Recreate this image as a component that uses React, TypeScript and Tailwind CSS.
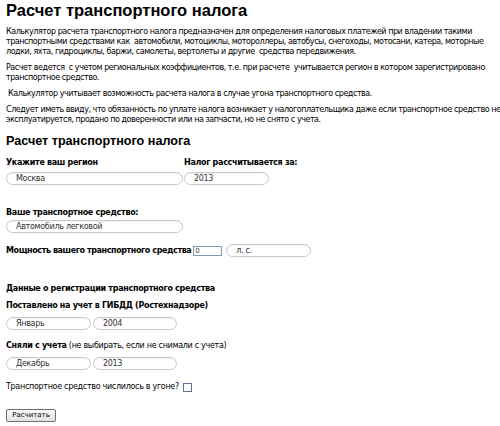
import React, { useState } from "react";

// Rounded text field, like the old form skin
const Field: React.FC<{ value: string; width: string }> = ({ value, width }) => (
  <div
    className={`${width} h-[13px] rounded-full border border-[#c9c9c9] bg-white pl-[9px] flex items-center text-[8px] text-[#333] shadow-[inset_0_1px_1px_rgba(0,0,0,0.06)]`}
  >
    {value}
  </div>
);

const App: React.FC = () => {
  const [stolen, setStolen] = useState(false);

  return (
    <div className="w-[500px] h-[426px] bg-white px-[6px] text-black font-['DejaVu_Sans',sans-serif] text-[8px] tracking-[-0.3px] overflow-hidden">
      <h1 className="font-['Liberation_Sans',sans-serif] font-bold text-[16.5px] leading-[20px] tracking-normal">
        Расчет транспортного налога
      </h1>

      <div className="mt-[7px] leading-[10px] whitespace-pre tracking-[-0.45px]">
        <p>
          Калькулятор расчета транспортного налога предназначен для определения налоговых платежей при владении такими
          <br />
          транспортными средствами как  автомобили, мотоциклы, мотороллеры, автобусы, снегоходы, мотосани, катера, моторные
          <br />
          лодки, яхта, гидроциклы, баржи, самолеты, вертолеты и другие  средства передвижения.
        </p>
        <p className="mt-[6px]">
          Расчет ведется  с учетом региональных коэффициентов, т.е. при расчете  учитывается регион в котором зарегистрировано
          <br />
          транспортное средство.
        </p>
        <p className="mt-[6px]">
          {" "}Калькулятор учитывает возможность расчета налога в случае угона транспортного средства.
        </p>
        <p className="mt-[6px]">
          Следует иметь ввиду, что обязанность по уплате налога возникает у налогоплательщика даже если транспортное средство не
          <br />
          эксплуатируется, продано по доверенности или на запчасти, но не снято с учета.
        </p>
      </div>

      <h2 className="mt-[8px] font-['Liberation_Sans',sans-serif] font-bold text-[12.6px] leading-[16px] tracking-normal">
        Расчет транспортного налога
      </h2>

      {/* region + year */}
      <div className="mt-[9px] flex">
        <div className="w-[178px]">
          <div className="font-bold leading-[10px]">Укажите ваш регион</div>
          <div className="mt-[4px]">
            <Field value="Москва" width="w-[177px]" />
          </div>
        </div>
        <div>
          <div className="font-bold leading-[10px]">Налог рассчитывается за:</div>
          <div className="mt-[4px]">
            <Field value="2013" width="w-[85px]" />
          </div>
        </div>
      </div>

      <div className="mt-[23px] font-bold leading-[10px]">Ваше транспортное средство:</div>
      <div className="mt-[2px]">
        <Field value="Автомобиль легковой" width="w-[177px]" />
      </div>

      <div className="mt-[11px] flex items-center h-[13px]">
        <span className="font-bold leading-[10px] tracking-[-0.4px]">Мощность вашего транспортного средства</span>
        <div className="ml-[2px] w-[29px] h-[10px] border border-[#7f9db9] bg-white text-[7px] leading-[8px] pl-[1px] text-[#444]">
          0
        </div>
        <div className="ml-[4px]">
          <Field value="л. с." width="w-[85px]" />
        </div>
      </div>

      <div className="mt-[27px] font-bold leading-[10px]">Данные о регистрации транспортного средства</div>
      <div className="mt-[7px] font-bold leading-[10px]">Поставлено на учет в ГИБДД (Ростехнадзоре)</div>
      <div className="mt-[6px] flex gap-[2px]">
        <Field value="Январь" width="w-[85px]" />
        <Field value="2004" width="w-[84px]" />
      </div>

      <div className="mt-[11px] leading-[10px]">
        <span className="font-bold">Сняли с учета</span> (не выбирать, если не снимали с учета)
      </div>
      <div className="mt-[6px] flex gap-[2px]">
        <Field value="Декабрь" width="w-[85px]" />
        <Field value="2013" width="w-[84px]" />
      </div>

      <div className="mt-[12px] flex items-center leading-[10px]">
        <span>Транспортное средство числилось в угоне?</span>
        <button
          type="button"
          onClick={() => setStolen(!stolen)}
          className="ml-[4px] w-[9px] h-[9px] border border-[#5f6f8f] bg-white flex items-center justify-center text-[7px] leading-none"
        >
          {stolen ? "✓" : ""}
        </button>
      </div>

      <div className="mt-[17px]">
        <button
          type="button"
          className="w-[50px] h-[13px] rounded-[2px] border border-[#707070] bg-gradient-to-b from-[#fafafa] to-[#e2e2e2] text-[7px] leading-[11px] tracking-normal"
        >
          Расчитать
        </button>
      </div>
    </div>
  );
};

export default App;
